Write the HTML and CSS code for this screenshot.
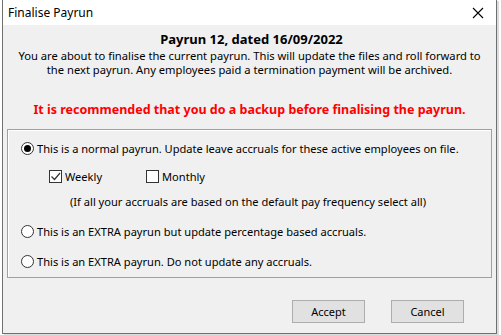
FILE: index.html
```html
<!DOCTYPE html>
<html lang="en">
<head>
    <meta charset="UTF-8">
    <title>Finalise Payrun</title>
    <link rel="stylesheet" href="styles.css">
</head>
<body>
    <div class="window">
        <div class="titlebar">
            <span class="title">Finalise Payrun</span>
            <span class="close">
                <svg width="12" height="12" viewBox="0 0 12 12"><path d="M1 1 L11 11 M11 1 L1 11" stroke="#000" stroke-width="1.1" fill="none"/></svg>
            </span>
        </div>

        <div class="content">
            <h3 class="heading">Payrun 12, dated 16/09/2022</h3>
            <p class="intro">You are about to finalise the current payrun. This will update the files and roll forward to<br>the next payrun. Any employees paid a termination payment will be archived.</p>
            <p class="warning">It is recommended that you do a backup before finalising the payrun.</p>

            <div class="group">
                <label class="option">
                    <span class="radio checked"></span>
                    This is a normal payrun. Update leave accruals for these active employees on file.
                </label>
                <div class="freq">
                    <label class="check-item weekly">
                        <span class="checkbox checked">
                            <svg width="11" height="11" viewBox="0 0 11 11"><path d="M1.5 5.5 L4.5 8.5 L10 2" stroke="#333" stroke-width="1.2" fill="none"/></svg>
                        </span>
                        Weekly
                    </label>
                    <label class="check-item">
                        <span class="checkbox"></span>
                        Monthly
                    </label>
                </div>
                <div class="note">(If all your accruals are based on the default pay frequency select all)</div>
                <label class="option extra">
                    <span class="radio"></span>
                    This is an EXTRA payrun but update percentage based accruals.
                </label>
                <label class="option extra last">
                    <span class="radio"></span>
                    This is an EXTRA payrun. Do not update any accruals.
                </label>
            </div>

            <div class="actions">
                <button class="btn">Accept</button>
                <button class="btn">Cancel</button>
            </div>
        </div>
    </div>
</body>
</html>
```
FILE: styles.css
```css
* {
    box-sizing: border-box;
    margin: 0;
    padding: 0;
}

body {
    font-family: "Noto Sans", "Open Sans", sans-serif;
    font-size: 11.1px;
    color: #000;
    background: #fff;
    width: 501px;
    height: 335px;
    overflow: hidden;
}

.window {
    margin-left: 2px;
    width: 495px;
    height: 334px;
    background: #f0f0f0;
    border: 1px solid #707070;
    border-top: none;
    box-shadow: 2px 1px 0 #dcdcdc;
}

.titlebar {
    height: 25px;
    background: #fff;
    display: flex;
    justify-content: space-between;
    align-items: center;
    padding-left: 5px;
    padding-right: 12px;
}

.title {
    font-size: 12px;
}

.close {
    display: flex;
}

.content {
    padding: 6px 4px 0 4px;
}

.heading {
    text-align: center;
    font-size: 13px;
    font-weight: bold;
    line-height: 16px;
    margin-left: 4px;
}

.intro {
    text-align: center;
    line-height: 14px;
    margin-top: 2px;
    font-size: 11.2px;
}

.warning {
    text-align: center;
    color: #ff0000;
    font-weight: bold;
    font-size: 12.5px;
    line-height: 16px;
    margin-top: 25px;
}

.group {
    margin-top: 11px;
    height: 149px;
    border: 1px solid #a0a0a0;
    box-shadow: inset 1px 1px 0 #fff;
    padding: 10px 0 0 13px;
}

.option {
    display: flex;
    align-items: center;
    gap: 3px;
    height: 16px;
}

.radio {
    width: 13px;
    height: 13px;
    border: 1px solid #333;
    border-radius: 50%;
    background: #fff;
    display: flex;
    align-items: center;
    justify-content: center;
}

.radio.checked::after {
    content: "";
    width: 7px;
    height: 7px;
    border-radius: 50%;
    background: #000;
}

.freq {
    display: flex;
    margin-top: 12px;
    padding-left: 28px;
    height: 16px;
}

.check-item {
    display: flex;
    align-items: center;
    gap: 3px;
}

.weekly {
    width: 97px;
}

.checkbox {
    width: 13px;
    height: 13px;
    border: 1px solid #333;
    background: #fff;
    display: flex;
    align-items: center;
    justify-content: center;
}

.note {
    margin-top: 10px;
    padding-left: 49px;
    line-height: 16px;
}

.option.extra {
    margin-top: 13px;
}

.option.last {
    margin-top: 14px;
}

.actions {
    display: flex;
    justify-content: flex-end;
    gap: 26px;
    margin-top: 22px;
    padding-right: 28px;
}

.btn {
    width: 73px;
    height: 23px;
    background: #e1e1e1;
    border: 1px solid #adadad;
    font-family: inherit;
    font-size: 11px;
    color: #000;
}
```
